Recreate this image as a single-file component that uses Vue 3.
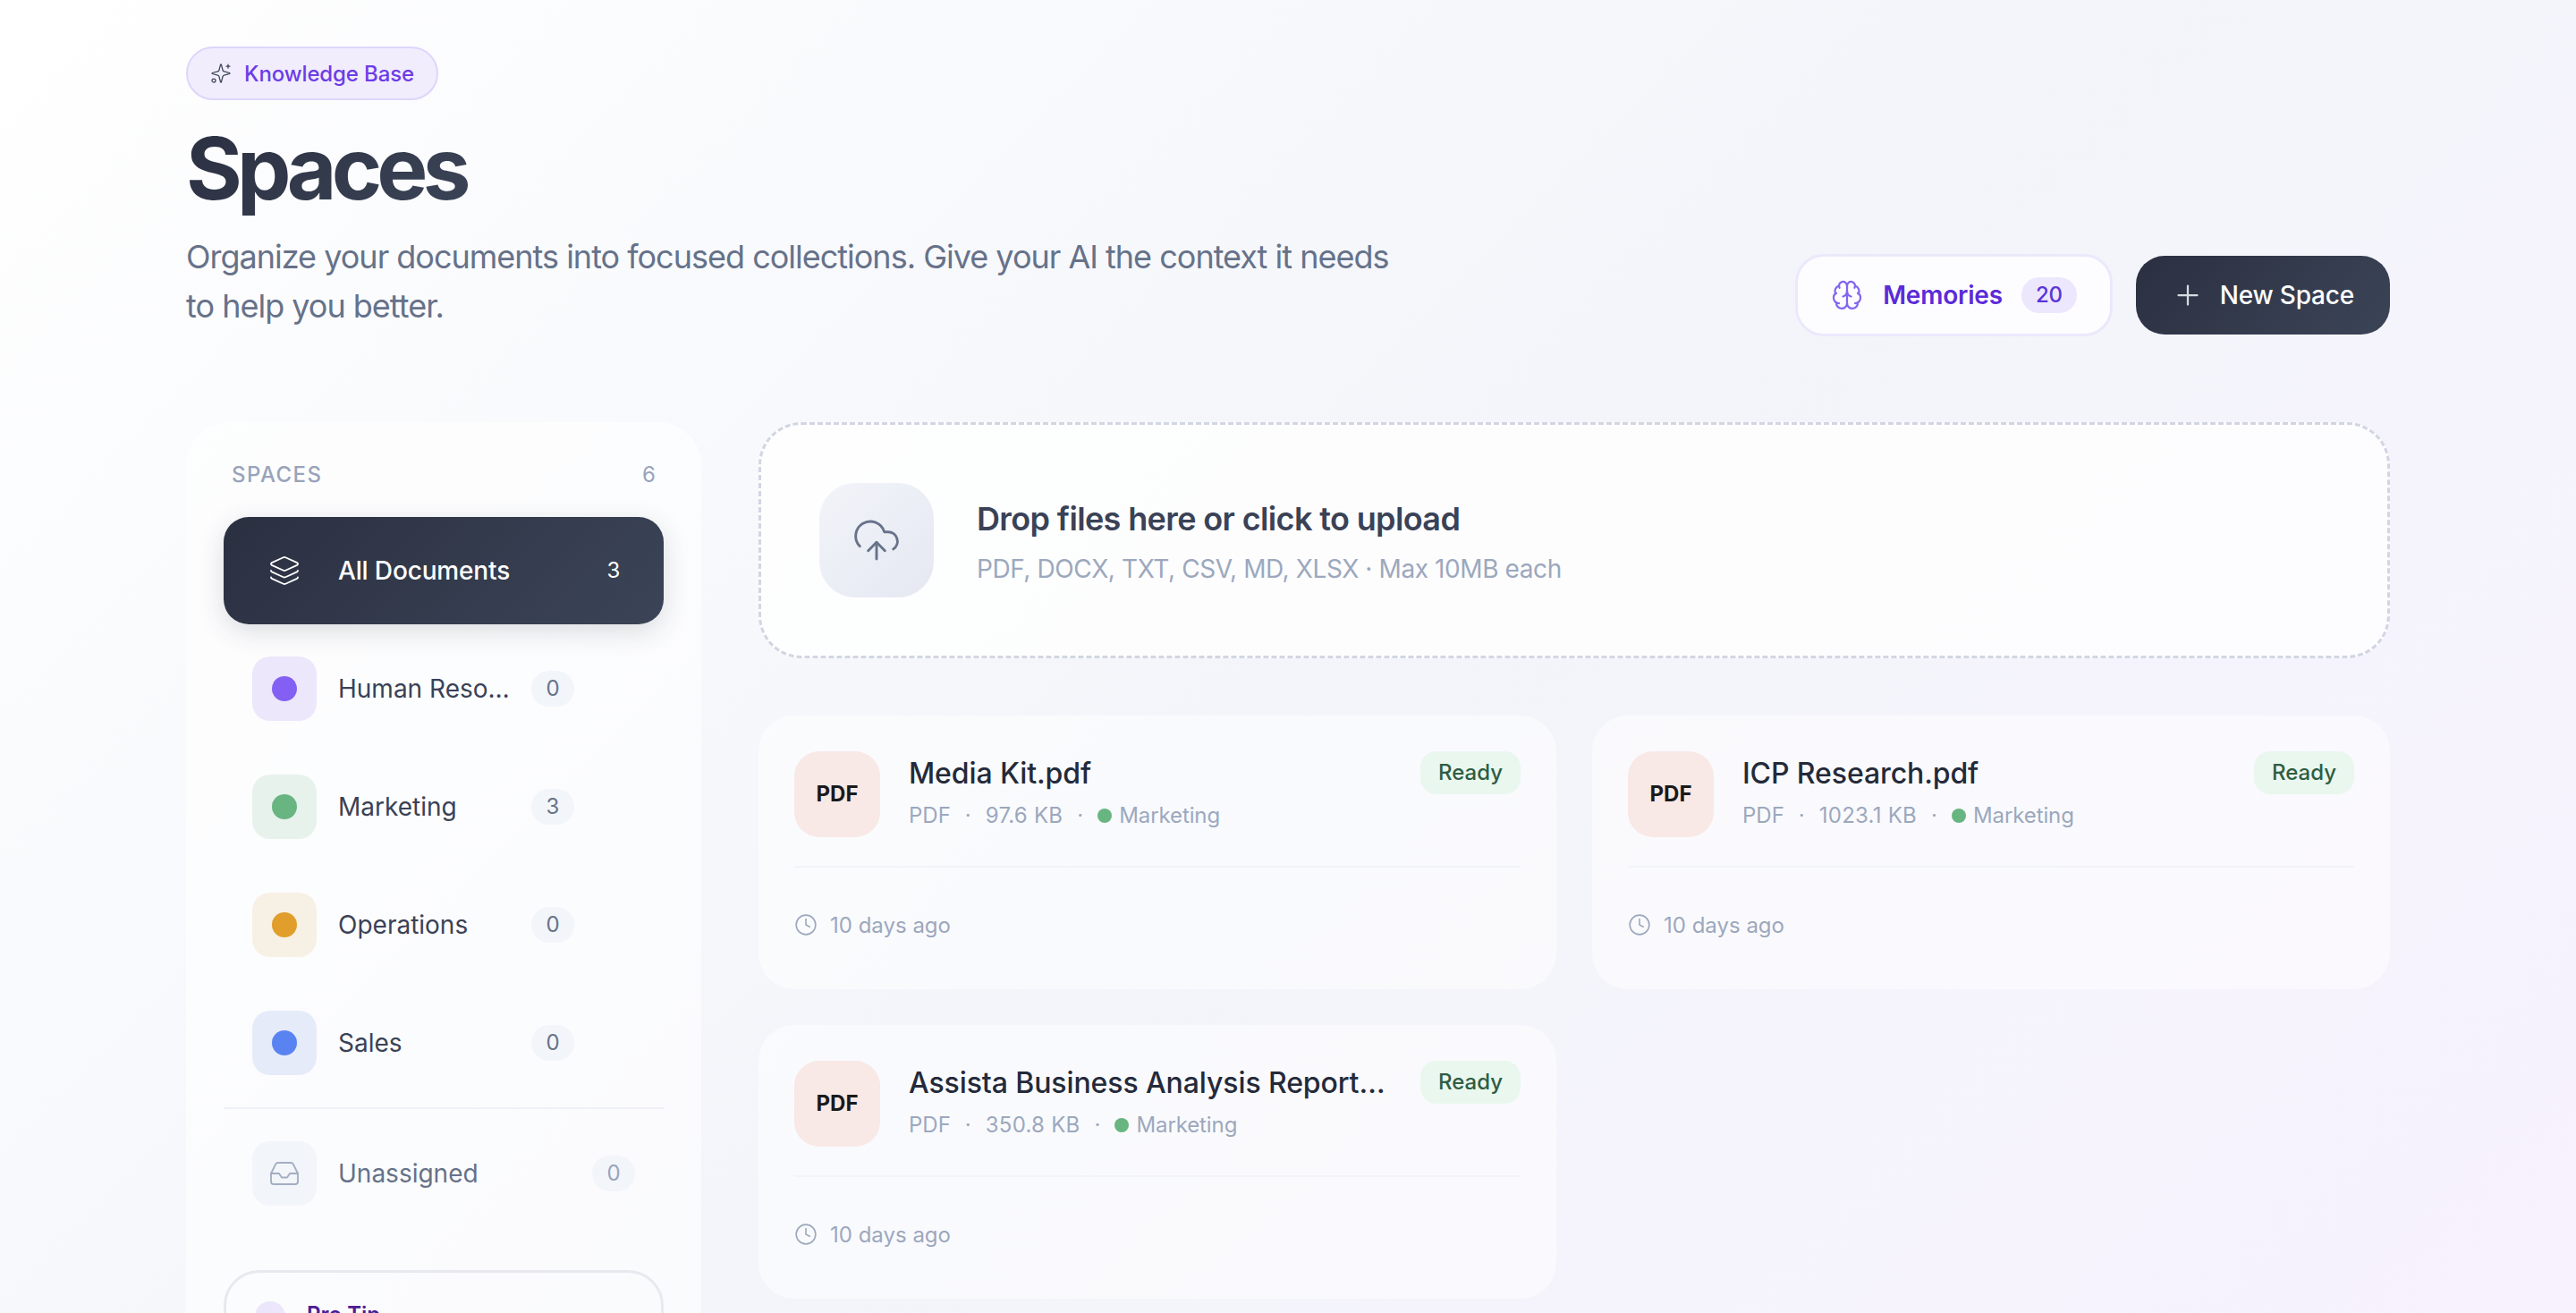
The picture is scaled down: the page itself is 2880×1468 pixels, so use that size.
<template>
  <div class="page">
    <!-- En-tête -->
    <header class="header">
      <div class="header-left">
        <div class="badge">
          <svg class="badge-icon" viewBox="0 0 24 24">
            <path d="M9.937 15.5A2 2 0 0 0 8.5 14.063l-6.135-1.582a.5.5 0 0 1 0-.962L8.5 9.936A2 2 0 0 0 9.937 8.5l1.582-6.135a.5.5 0 0 1 .963 0L14.063 8.5A2 2 0 0 0 15.5 9.937l6.135 1.581a.5.5 0 0 1 0 .964L15.5 14.063a2 2 0 0 0-1.437 1.437l-1.582 6.135a.5.5 0 0 1-.963 0z" />
            <path d="M20 2v4" />
            <path d="M22 4h-4" />
            <circle cx="4" cy="20" r="2" />
          </svg>
          <span>Knowledge Base</span>
        </div>
        <div>
          <h1 class="title">Spaces</h1>
        </div>
        <p class="subtitle">Organize your documents into focused collections. Give your AI the context it needs to help you better.</p>
      </div>
      <div class="header-actions">
        <button class="btn-memories">
          <svg class="memories-icon" viewBox="0 0 24 24">
            <path d="M12 18V5" />
            <path d="M15 13a4.17 4.17 0 0 1-3-4 4.17 4.17 0 0 1-3 4" />
            <path d="M17.598 6.5A3 3 0 1 0 12 5a3 3 0 1 0-5.598 1.5" />
            <path d="M17.997 5.125a4 4 0 0 1 2.526 5.77" />
            <path d="M18 18a4 4 0 0 0 2-7.464" />
            <path d="M19.967 17.483A4 4 0 1 1 12 18a4 4 0 1 1-7.967-.517" />
            <path d="M6 18a4 4 0 0 1-2-7.464" />
            <path d="M6.003 5.125a4 4 0 0 0-2.526 5.77" />
          </svg>
          <span>Memories</span>
          <span class="memories-count">20</span>
        </button>
        <button class="btn-new">
          <svg class="plus-icon" viewBox="0 0 24 24">
            <path d="M5 12h14" />
            <path d="M12 5v14" />
          </svg>
          <span>New Space</span>
        </button>
      </div>
    </header>

    <div class="layout">
      <!-- Barre latérale -->
      <aside class="sidebar">
        <div class="sidebar-head">
          <span class="sidebar-label">SPACES</span>
          <span class="sidebar-total">6</span>
        </div>

        <div class="item active">
          <div class="item-icon">
            <svg class="layers-icon" viewBox="0 0 24 24">
              <path d="M12.83 2.18a2 2 0 0 0-1.66 0L2.6 6.08a1 1 0 0 0 0 1.83l8.58 3.91a2 2 0 0 0 1.66 0l8.58-3.9a1 1 0 0 0 0-1.83z" />
              <path d="M2 12a1 1 0 0 0 .58.91l8.6 3.91a2 2 0 0 0 1.65 0l8.58-3.9A1 1 0 0 0 22 12" />
              <path d="M2 17a1 1 0 0 0 .58.91l8.6 3.91a2 2 0 0 0 1.65 0l8.58-3.9A1 1 0 0 0 22 17" />
            </svg>
          </div>
          <span class="item-name">All Documents</span>
          <span class="item-count">3</span>
        </div>

        <div v-for="space in spaces" :key="space.name" class="item">
          <div class="item-icon" :style="{ background: space.tint }">
            <span class="item-dot" :style="{ background: space.color }"></span>
          </div>
          <span class="item-name">{{ space.name }}</span>
          <span class="item-count">{{ space.count }}</span>
          <span class="item-actions"></span>
        </div>

        <div class="sidebar-sep"></div>

        <div class="item muted">
          <div class="item-icon">
            <svg class="inbox-icon" viewBox="0 0 24 24">
              <polyline points="22 12 16 12 14 15 10 15 8 12 2 12" />
              <path d="M5.45 5.11 2 12v6a2 2 0 0 0 2 2h16a2 2 0 0 0 2-2v-6l-3.45-6.89A2 2 0 0 0 16.76 4H7.24a2 2 0 0 0-1.79 1.11z" />
            </svg>
          </div>
          <span class="item-name">Unassigned</span>
          <span class="item-count">0</span>
        </div>

        <div class="tip">
          <span class="tip-dot"></span>
          <strong class="tip-title">Pro Tip</strong>
        </div>
      </aside>

      <!-- Contenu principal -->
      <main class="main">
        <div class="upload">
          <div class="upload-icon">
            <svg viewBox="0 0 24 24">
              <path d="M12 13v8" />
              <path d="M4 14.899A7 7 0 1 1 15.71 8h1.79a4.5 4.5 0 0 1 2.5 8.242" />
              <path d="m8 17 4-4 4 4" />
            </svg>
          </div>
          <div class="upload-text">
            <div class="upload-title">Drop files here or click to upload</div>
            <div class="upload-sub">PDF, DOCX, TXT, CSV, MD, XLSX · Max 10MB each</div>
          </div>
        </div>

        <div class="cards">
          <div v-for="doc in documents" :key="doc.name" class="card">
            <div class="card-top">
              <div class="file-icon">PDF</div>
              <div class="file-info">
                <div class="file-name">{{ doc.name }}</div>
                <div class="file-meta">
                  <span>PDF</span>
                  <span class="meta-sep">·</span>
                  <span class="meta-size">{{ doc.size }}</span>
                  <span class="meta-sep">·</span>
                  <span class="meta-space"><i class="meta-dot"></i>Marketing</span>
                </div>
              </div>
              <span class="status">Ready</span>
            </div>
            <div class="card-foot">
              <svg class="clock-icon" viewBox="0 0 24 24">
                <circle cx="12" cy="12" r="10" />
                <polyline points="12 6 12 12 16 14" />
              </svg>
              <span>10 days ago</span>
            </div>
          </div>
        </div>
      </main>
    </div>
  </div>
</template>

<script setup>
const spaces = [
  { name: 'Human Resources', count: 0, color: '#8360f3', tint: '#ece7fb' },
  { name: 'Marketing', count: 3, color: '#68b581', tint: '#e8f2ec' },
  { name: 'Operations', count: 0, color: '#e19e2a', tint: '#f7f0e4' },
  { name: 'Sales', count: 0, color: '#5a83f2', tint: '#e6ebfa' }
]

const documents = [
  { name: 'Media Kit.pdf', size: '97.6 KB' },
  { name: 'ICP Research.pdf', size: '1023.1 KB' },
  { name: 'Assista Business Analysis Report.pdf', size: '350.8 KB' }
]
</script>

<style>
html,
body {
  margin: 0;
  height: 100%;
  overflow: hidden;
}
</style>

<style scoped>
.page {
  box-sizing: border-box;
  height: 1468px;
  overflow: hidden;
  padding: 52px 208px 0;
  font-family: Inter, "Liberation Sans", sans-serif;
  background: linear-gradient(135deg, #ffffff 0%, #f3f5fa 50%, #f7f2fe 100%);
}

svg {
  display: block;
  fill: none;
  stroke: currentColor;
  stroke-linecap: round;
  stroke-linejoin: round;
  flex-shrink: 0;
}

/* En-tête */
.header {
  display: flex;
  justify-content: space-between;
  align-items: flex-end;
  height: 420px;
}

.header-left {
  align-self: flex-start;
}

.badge {
  box-sizing: border-box;
  display: inline-flex;
  align-items: center;
  gap: 14px;
  height: 60px;
  padding: 0 25px;
  border: 2px solid #ddd6fb;
  border-radius: 30px;
  background: #f1edfd;
  color: #6d3ce6;
  font-size: 24px;
  font-weight: 500;
  letter-spacing: -0.12px;
}

.badge-icon {
  width: 24px;
  height: 24px;
  stroke-width: 1.25;
  color: #3a4256;
}

.title {
  display: inline-block;
  margin: 23px 0 0;
  padding-right: 8px;
  font-size: 96px;
  line-height: 106px;
  font-weight: 700;
  letter-spacing: -5.8px;
  color: transparent;
  background: linear-gradient(135deg, #2b3041, #3b4457);
  background-clip: text;
  -webkit-background-clip: text;
}

.subtitle {
  margin: 19px 0 0;
  max-width: 1360px;
  font-size: 36px;
  line-height: 55px;
  letter-spacing: -1px;
  color: #667289;
}

.header-actions {
  display: flex;
  align-items: center;
  gap: 26px;
  padding-bottom: 96px;
}

button {
  font-family: inherit;
  cursor: pointer;
}

.btn-memories {
  box-sizing: border-box;
  display: flex;
  align-items: center;
  height: 92px;
  padding: 0 37px;
  border: 3px solid #ece8fc;
  border-radius: 32px;
  background: #fdfdff;
  color: #5b2bd8;
  font-size: 28px;
  font-weight: 600;
  letter-spacing: -0.2px;
}

.memories-icon {
  width: 36px;
  height: 36px;
  stroke-width: 1.5;
  color: #8366f0;
  margin-right: 22px;
}

.memories-count {
  margin-left: 21px;
  padding: 0 16px;
  height: 40px;
  line-height: 40px;
  border-radius: 20px;
  background: #ece7fd;
  font-size: 24px;
  font-weight: 500;
  color: #5b34d9;
}

.btn-new {
  box-sizing: border-box;
  display: flex;
  align-items: center;
  gap: 18px;
  height: 88px;
  padding: 0 40px;
  border: 0;
  border-radius: 32px;
  background: linear-gradient(135deg, #2b3041, #3b4457);
  color: #fff;
  font-size: 28px;
  font-weight: 500;
  letter-spacing: -0.2px;
}

.plus-icon {
  width: 36px;
  height: 36px;
  stroke-width: 1.5;
  color: #d8dbe2;
}

/* Mise en page */
.layout {
  display: grid;
  grid-template-columns: 576px 1fr;
  gap: 64px;
  align-items: start;
}

/* Barre latérale */
.sidebar {
  box-sizing: border-box;
  padding: 42px 42px 40px;
  border-radius: 48px;
  background: rgba(255, 255, 255, 0.6);
}

.sidebar-head {
  display: flex;
  justify-content: space-between;
  padding: 0 9px;
  height: 34px;
  line-height: 34px;
  margin-bottom: 30px;
  font-size: 24px;
  color: #98a4ba;
}

.sidebar-label {
  font-weight: 500;
  letter-spacing: 0.06em;
}

.item {
  box-sizing: border-box;
  display: flex;
  align-items: center;
  height: 120px;
  padding: 0 32px;
  margin-bottom: 12px;
  border-radius: 28px;
  color: #3a4256;
}

.item.active {
  background: linear-gradient(135deg, #2b3041, #3b4457);
  color: #fff;
  box-shadow: 0 8px 30px rgba(45, 49, 66, 0.16);
}

.item-icon {
  width: 72px;
  height: 72px;
  flex-shrink: 0;
  display: flex;
  align-items: center;
  justify-content: center;
  border-radius: 20px;
  margin-right: 24px;
}

.layers-icon,
.inbox-icon {
  width: 36px;
  height: 36px;
  stroke-width: 1.25;
}

.item-dot {
  width: 28px;
  height: 28px;
  border-radius: 50%;
}

.item-name {
  flex: 1;
  min-width: 0;
  overflow: hidden;
  white-space: nowrap;
  text-overflow: ellipsis;
  font-size: 28px;
  font-weight: 400;
}

.item.active .item-name {
  font-weight: 500;
  letter-spacing: -0.15px;
}

.item-count {
  min-width: 48px;
  height: 40px;
  margin-left: 24px;
  line-height: 40px;
  text-align: center;
  border-radius: 20px;
  background: #f2f5fa;
  color: #677389;
  font-size: 24px;
}

.item.active .item-count {
  background: transparent;
  color: #fff;
}

.item-actions {
  width: 68px;
  flex-shrink: 0;
}

.item.muted {
  color: #667289;
}

.item.muted .item-icon {
  background: #f2f5fa;
  color: #a3aec2;
}

.item.muted .item-count {
  color: #98a4ba;
}

.sidebar-sep {
  height: 2px;
  margin-bottom: 12px;
  background: #eff1f6;
}

.tip {
  display: flex;
  gap: 24px;
  margin-top: 48px;
  padding: 32px;
  height: 160px;
  border: 3px solid #e8e9ee;
  border-radius: 40px;
}

.tip-dot {
  width: 34px;
  height: 34px;
  flex-shrink: 0;
  border-radius: 50%;
  background: #ebe6fb;
}

.tip-title {
  font-size: 24px;
  font-weight: 600;
  color: #4c1d95;
}

/* Zone de dépôt */
.upload {
  box-sizing: border-box;
  display: flex;
  align-items: center;
  gap: 48px;
  height: 264px;
  padding: 0 65px;
  margin-bottom: 64px;
  border: 3px dashed #d2d6e2;
  border-radius: 48px;
  background: rgba(255, 255, 255, 0.8);
}

.upload-icon {
  width: 128px;
  height: 128px;
  flex-shrink: 0;
  display: flex;
  align-items: center;
  justify-content: center;
  border-radius: 40px;
  background: linear-gradient(135deg, #f2f4f9, #e5e8f2);
  color: #677389;
}

.upload-icon svg {
  width: 56px;
  height: 56px;
  stroke-width: 1.25;
}

.upload-text {
  padding-top: 4px;
}

.upload-title {
  font-size: 36px;
  line-height: 48px;
  font-weight: 600;
  letter-spacing: -0.63px;
  color: #3a4256;
}

.upload-sub {
  margin-top: 12px;
  font-size: 28px;
  line-height: 40px;
  letter-spacing: -0.4px;
  color: #9ca8bd;
}

/* Cartes de documents */
.cards {
  display: grid;
  grid-template-columns: 1fr 1fr;
  gap: 40px;
}

.card {
  box-sizing: border-box;
  height: 306px;
  padding: 40px;
  border-radius: 40px;
  background: rgba(255, 255, 255, 0.5);
  min-width: 0;
}

.card-top {
  display: flex;
  align-items: flex-start;
  gap: 32px;
  padding-bottom: 32px;
  border-bottom: 2px solid #f1f4f8;
}

.file-icon {
  width: 96px;
  height: 96px;
  flex-shrink: 0;
  line-height: 96px;
  text-align: center;
  border-radius: 28px;
  background: #f8e8e6;
  color: #1a1a1a;
  font-size: 24px;
  font-weight: 700;
}

.file-info {
  flex: 1;
  min-width: 0;
}

.file-name {
  margin-top: 5px;
  height: 40px;
  line-height: 40px;
  overflow: hidden;
  white-space: nowrap;
  text-overflow: ellipsis;
  font-size: 32px;
  font-weight: 500;
  letter-spacing: -0.1px;
  color: #242a3a;
}

.file-meta {
  display: flex;
  align-items: center;
  gap: 16px;
  margin-top: 10px;
  font-size: 24px;
  line-height: 34px;
  color: #9ca8bd;
}

.meta-size {
  letter-spacing: 0.25px;
}

.meta-space {
  display: inline-flex;
  align-items: center;
  gap: 8px;
  letter-spacing: -0.1px;
}

.meta-dot {
  width: 16px;
  height: 16px;
  border-radius: 50%;
  background: #68b581;
}

.status {
  flex-shrink: 0;
  height: 48px;
  line-height: 48px;
  padding: 0 20px;
  border-radius: 18px;
  background: #e9f7ef;
  color: #2f5d43;
  font-size: 24px;
  font-weight: 500;
}

.card-foot {
  display: flex;
  align-items: center;
  gap: 14px;
  height: 64px;
  padding-top: 32px;
  font-size: 24px;
  color: #9ca8bd;
}

.clock-icon {
  width: 26px;
  height: 26px;
  stroke-width: 1.5;
}
</style>
